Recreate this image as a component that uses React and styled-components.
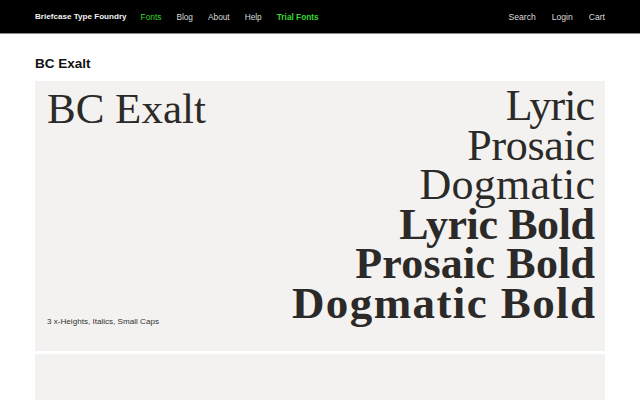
import React from 'react';
import styled, { createGlobalStyle } from 'styled-components';

const GlobalStyle = createGlobalStyle`
  body {
    margin: 0;
    background: #ffffff;
    font-family: "Liberation Sans", Arial, sans-serif;
    color: #111;
    -webkit-font-smoothing: antialiased;
  }
`;

const Nav = styled.nav`
  height: 33px;
  background: #000;
  border-bottom: 1px solid #8a8a8a;
  display: flex;
  align-items: center;
  padding: 0 35px;
  font-size: 8px;
  color: #e6e6e6;
`;

const Brand = styled.a`
  font-weight: 700;
  font-size: 8.1px;
  color: #f2f2f2;
  margin-right: 14px;
`;

const NavLinks = styled.div`
  display: flex;
  gap: ${(p) => (p.$right ? '16px' : '15px')};
  flex: ${(p) => (p.$right ? 'none' : 1)};
`;

const NavLink = styled.a`
  color: ${(p) => (p.$accent ? '#35d82b' : '#dcdcdc')};
  font-weight: ${(p) => (p.$bold ? 700 : 400)};
  font-size: ${(p) => (p.$right ? '8.6px' : '8.3px')};
`;

const Main = styled.main`
  padding: 0 35px;
`;

const Heading = styled.h1`
  margin: 0;
  padding: 22px 0 9px;
  font-size: 13.5px;
  font-weight: 700;
  line-height: 16px;
  color: #111;
`;

const Specimen = styled.section`
  background: #f3f2f0;
  height: 270px;
  padding: 5px 10px 0 12px;
  box-sizing: border-box;
  display: flex;
  justify-content: space-between;
  font-family: "Liberation Serif", "Times New Roman", serif;
  color: #2b2a28;
`;

const LeftCol = styled.div`
  display: flex;
  flex-direction: column;
  justify-content: space-between;
  padding-bottom: 25px;
`;

const FamilyName = styled.div`
  font-size: 43px;
  line-height: 46px;
`;

const Features = styled.div`
  font-family: "Liberation Sans", Arial, sans-serif;
  font-size: 8.1px;
  color: #333;
`;

const Styles = styled.div`
  display: flex;
  flex-direction: column;
  align-items: flex-end;
`;

const StyleLine = styled.div`
  font-size: ${(p) => p.$size}px;
  font-weight: ${(p) => (p.$bold ? 700 : 400)};
  line-height: 39.6px;
  letter-spacing: ${(p) => p.$track}px;
  margin-right: ${(p) => -p.$track}px;
`;

const NextSpecimen = styled.section`
  background: #f3f2f0;
  height: 60px;
  margin-top: 3px;
`;

// name, bold, size, tracking in px
const styleNames = [
  ['Lyric', false, 44, -0.9],
  ['Prosaic', false, 44, -0.3],
  ['Dogmatic', false, 44, 0.3],
  ['Lyric Bold', true, 44, -0.4],
  ['Prosaic Bold', true, 44, 0.2],
  ['Dogmatic Bold', true, 45, 1.4],
];

export default function App() {
  return (
    <>
      <GlobalStyle />
      <Nav>
        <Brand>Briefcase Type Foundry</Brand>
        <NavLinks>
          <NavLink $accent>Fonts</NavLink>
          <NavLink>Blog</NavLink>
          <NavLink>About</NavLink>
          <NavLink>Help</NavLink>
          <NavLink $accent $bold>Trial Fonts</NavLink>
        </NavLinks>
        <NavLinks $right>
          <NavLink $right>Search</NavLink>
          <NavLink $right>Login</NavLink>
          <NavLink $right>Cart</NavLink>
        </NavLinks>
      </Nav>
      <Main>
        <Heading>BC Exalt</Heading>
        <Specimen>
          <LeftCol>
            <FamilyName>BC Exalt</FamilyName>
            <Features>3 x-Heights, Italics, Small Caps</Features>
          </LeftCol>
          <Styles>
            {styleNames.map(([name, bold, size, track]) => (
              <StyleLine key={name} $bold={bold} $size={size} $track={track}>{name}</StyleLine>
            ))}
          </Styles>
        </Specimen>
        <NextSpecimen />
      </Main>
    </>
  );
}
